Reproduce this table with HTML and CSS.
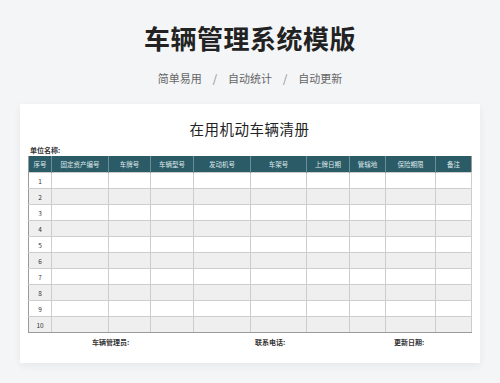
FILE: index.html
```html
<!DOCTYPE html>
<html lang="zh-CN">
<head>
<meta charset="utf-8">
<link rel="stylesheet" href="styles.css">
</head>
<body>
<header class="hero">
  <h1 class="hero-title">车辆管理系统模版</h1>
  <p class="hero-sub"><span>简单易用</span><span class="sep">/</span><span>自动统计</span><span class="sep">/</span><span>自动更新</span></p>
</header>
<main class="card">
  <h2 class="card-title">在用机动车辆清册</h2>
  <div class="unit">单位名称:</div>
  <table class="sheet">
    <colgroup>
      <col style="width:23px"><col style="width:57px"><col style="width:42px"><col style="width:43px"><col style="width:57px"><col style="width:56px"><col style="width:43px"><col style="width:36px"><col style="width:50px"><col style="width:36px">
    </colgroup>
    <thead>
      <tr><th>序号</th><th>固定资产编号</th><th>车牌号</th><th>车辆型号</th><th>发动机号</th><th>车架号</th><th>上牌日期</th><th>管辖地</th><th>保险期限</th><th>备注</th></tr>
    </thead>
    <tbody>
      <tr><td>1</td><td></td><td></td><td></td><td></td><td></td><td></td><td></td><td></td><td></td></tr>
      <tr><td>2</td><td></td><td></td><td></td><td></td><td></td><td></td><td></td><td></td><td></td></tr>
      <tr><td>3</td><td></td><td></td><td></td><td></td><td></td><td></td><td></td><td></td><td></td></tr>
      <tr><td>4</td><td></td><td></td><td></td><td></td><td></td><td></td><td></td><td></td><td></td></tr>
      <tr><td>5</td><td></td><td></td><td></td><td></td><td></td><td></td><td></td><td></td><td></td></tr>
      <tr><td>6</td><td></td><td></td><td></td><td></td><td></td><td></td><td></td><td></td><td></td></tr>
      <tr><td>7</td><td></td><td></td><td></td><td></td><td></td><td></td><td></td><td></td><td></td></tr>
      <tr><td>8</td><td></td><td></td><td></td><td></td><td></td><td></td><td></td><td></td><td></td></tr>
      <tr><td>9</td><td></td><td></td><td></td><td></td><td></td><td></td><td></td><td></td><td></td></tr>
      <tr><td>10</td><td></td><td></td><td></td><td></td><td></td><td></td><td></td><td></td><td></td></tr>
    </tbody>
  </table>
  <div class="footer">
    <span class="f1">车辆管理员:</span>
    <span class="f2">联系电话:</span>
    <span class="f3">更新日期:</span>
  </div>
</main>
</body>
</html>
```
FILE: styles.css
```css
html, body {
  margin: 0;
  padding: 0;
}
body {
  background: #f4f5f7;
  font-family: "Noto Sans CJK SC", "Noto Sans", sans-serif;
  width: 500px;
  height: 383px;
  overflow: hidden;
}
.hero {
  text-align: center;
  padding-top: 22px;
}
.hero-title {
  margin: 0;
  font-size: 26px;
  line-height: 32px;
  font-weight: 700;
  color: #222;
  letter-spacing: 0.5px;
}
.hero-sub {
  margin: 16px 0 0;
  font-size: 11px;
  line-height: 16px;
  color: #666;
  letter-spacing: 0;
}
.hero-sub .sep {
  margin: 0 11px;
  color: #888;
}
.card {
  margin: 18px 20px 0;
  height: 259px;
  background: #fff;
  box-shadow: 0 3px 8px rgba(0,0,0,0.06);
  padding: 0 9px 0 8px;
  box-sizing: border-box;
}
.card-title {
  margin: 0;
  padding-top: 15px;
  text-align: center;
  font-size: 14.5px;
  line-height: 20px;
  font-weight: 400;
  color: #222;
  letter-spacing: 0.5px;
}
.unit {
  margin-top: 6px;
  padding-left: 2px;
  font-size: 7px;
  line-height: 10px;
  font-weight: 700;
  color: #333;
}
.sheet {
  margin-top: 1px;
  width: 443px;
  table-layout: fixed;
  border-collapse: collapse;
  border-left: 1px solid #9a9a9a;
  border-right: 1px solid #9a9a9a;
  border-bottom: 1px solid #9a9a9a;
}
.sheet th {
  height: 16px;
  padding: 0;
  background: #2b5b67;
  color: #dde8ea;
  font-size: 6.5px;
  font-weight: 400;
  border-left: 1px solid #6b8f98;
  text-align: center;
}
.sheet th:first-child {
  border-left: none;
}
.sheet td {
  height: 15px;
  padding: 0;
  border: 1px solid #cdcdcd;
  font-size: 6.5px;
  color: #333;
  text-align: center;
}
.sheet tbody tr:nth-child(even) td {
  background: #efefef;
}
.sheet td:first-child {
  border-left-color: #9a9a9a;
}
.sheet tbody tr:last-child td {
  border-bottom-color: #9a9a9a;
}
.footer {
  display: grid;
  grid-template-columns: 163px 139px 1fr;
  margin-top: 4px;
  padding-left: 64px;
  font-size: 7px;
  line-height: 10px;
  font-weight: 700;
  color: #333;
}
```
